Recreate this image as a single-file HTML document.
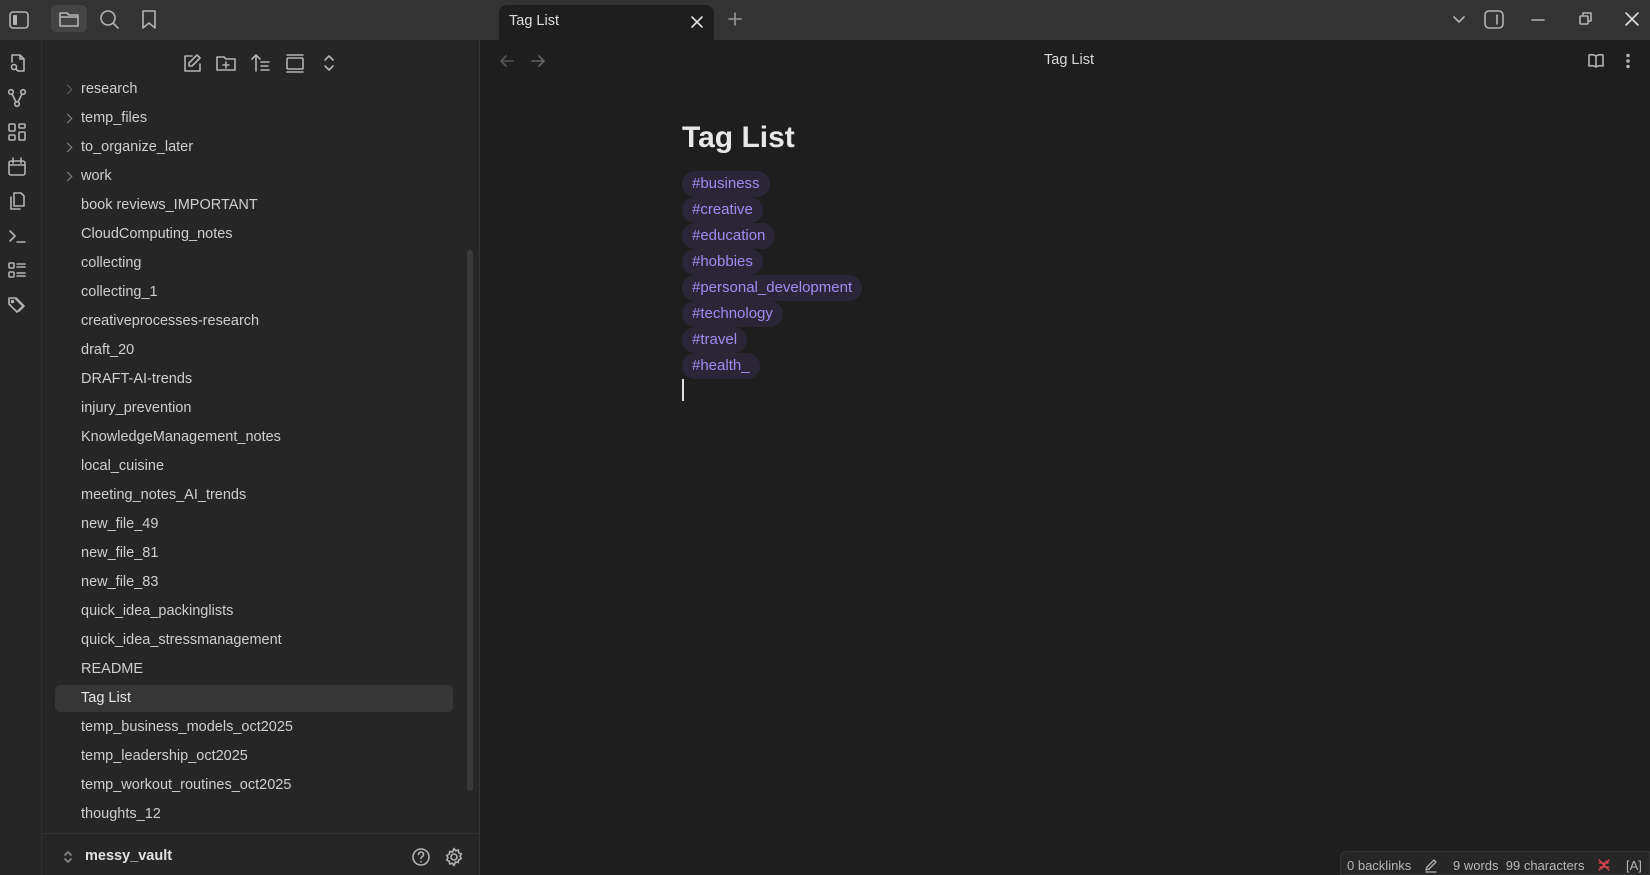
<!DOCTYPE html>
<html><head><meta charset="utf-8"><style>
*{margin:0;padding:0;box-sizing:border-box}
body{width:1650px;height:875px;overflow:hidden;background:#1e1e1e;font-family:"Liberation Sans","DejaVu Sans",sans-serif;color:#dadada;position:relative}
.abs{position:absolute}
svg{position:absolute;fill:none;stroke:#b3b3b3;stroke-width:1.6;stroke-linecap:round;stroke-linejoin:round}
.top{left:0;top:0;width:1650px;height:40px;background:#333333}
.rib{left:0;top:40px;width:42px;height:835px;background:#262626;border-right:1px solid #303030}
.side{left:42px;top:40px;width:438px;height:835px;background:#262626;border-right:1px solid #363636}
.f{position:absolute;left:81px;font-size:14.5px;color:#cfcfcf;line-height:20px;white-space:nowrap}
.chev{position:absolute;left:64px;width:7px;height:7px;border-right:1.5px solid #888;border-top:1.5px solid #888;transform:rotate(45deg)}
.tag{position:absolute;left:682px;height:26px;padding:0 10px;border-radius:13px;background:#2a2638;color:#a08cf0;font-size:15px;line-height:26px;white-space:nowrap}
</style></head><body>
<div class="abs top"></div>
<svg style="left:8px;top:9px" width="22" height="22" viewBox="0 0 22 22"><rect x="2" y="3" width="18" height="16" rx="3"/><rect x="5" y="6" width="4" height="10" rx="1" fill="#b3b3b3" stroke="none"/></svg>
<div class="abs" style="left:51px;top:5px;width:36px;height:27px;background:#444;border-radius:5px"></div>
<svg style="left:58px;top:8px" width="22" height="22" viewBox="0 0 22 22"><path d="M2 5h7l2 2h9v11H2z M2 9h18"/></svg>
<svg style="left:98px;top:8px" width="22" height="22" viewBox="0 0 22 22"><circle cx="10" cy="10" r="7"/><path d="M15 15l5 5"/></svg>
<svg style="left:138px;top:8px" width="22" height="22" viewBox="0 0 22 22"><path d="M5 3h12v17l-6-5-6 5z"/></svg>
<div class="abs" style="left:499px;top:5px;width:215px;height:35px;background:#1e1e1e;border-radius:8px 8px 0 0"></div>
<div class="abs" style="left:509px;top:13px;font-size:14.5px;color:#dedede">Tag List</div>
<svg style="left:689px;top:14px" width="16" height="16" viewBox="0 0 16 16"><path d="M3 3l10 10M13 3L3 13" stroke="#ddd"/></svg>
<svg style="left:727px;top:11px" width="16" height="16" viewBox="0 0 16 16"><path d="M8 2v12M2 8h12" stroke="#999"/></svg>
<svg style="left:1451px;top:13px" width="16" height="14" viewBox="0 0 16 14"><path d="M3 4l5 5 5-5"/></svg>
<svg style="left:1483px;top:9px" width="22" height="22" viewBox="0 0 22 22"><rect x="2" y="2" width="18" height="17" rx="4"/><path d="M14 6v9"/></svg>
<svg style="left:1528px;top:10px" width="20" height="20" viewBox="0 0 20 20"><path d="M4 10h12"/></svg>
<svg style="left:1576px;top:9px" width="20" height="20" viewBox="0 0 20 20"><rect x="4" y="7" width="8" height="8" rx="1"/><path d="M7 7V4h8v8h-3"/></svg>
<svg style="left:1622px;top:9px" width="20" height="20" viewBox="0 0 20 20"><path d="M4 4l12 12M16 4L4 16" stroke="#ddd"/></svg>
<div class="abs rib"></div>
<svg style="left:6px;top:52px" width="22" height="22" viewBox="0 0 22 22"><path d="M6 10V3h8l4 4v12h-6 M14 3v4h4"/><circle cx="8" cy="15" r="2.5"/><path d="M10 17l2 2"/></svg>
<svg style="left:6px;top:87px" width="22" height="22" viewBox="0 0 22 22"><circle cx="5" cy="5" r="2.3"/><circle cx="17" cy="5" r="2.3"/><circle cx="11" cy="17" r="2.3"/><path d="M6 7l4 8M16 7l-4 8"/></svg>
<svg style="left:6px;top:121px" width="22" height="22" viewBox="0 0 22 22"><rect x="3" y="3" width="6" height="7" rx="1"/><rect x="13" y="3" width="6" height="4" rx="1"/><rect x="3" y="14" width="6" height="5" rx="1"/><rect x="13" y="11" width="6" height="8" rx="1"/></svg>
<svg style="left:6px;top:156px" width="22" height="22" viewBox="0 0 22 22"><rect x="3" y="5" width="16" height="14" rx="2"/><path d="M3 9h16M7 2v5M15 2v5"/></svg>
<svg style="left:6px;top:190px" width="22" height="22" viewBox="0 0 22 22"><path d="M8 3h7l3 3v10H8z M5 7v12h9"/></svg>
<svg style="left:6px;top:225px" width="22" height="22" viewBox="0 0 22 22"><path d="M4 6l5 5-5 5M11 17h8"/></svg>
<svg style="left:6px;top:259px" width="22" height="22" viewBox="0 0 22 22"><rect x="3" y="4" width="5" height="5" rx="1"/><rect x="3" y="13" width="5" height="5" rx="1"/><path d="M11 5h8M11 8h8M11 14h8M11 17h8"/></svg>
<svg style="left:6px;top:294px" width="22" height="22" viewBox="0 0 22 22"><path d="M3 4v6l8 8 6-6-8-8z M10 4l8 8-5 5"/><circle cx="6.5" cy="7.5" r="1"/></svg>
<div class="abs side"></div>
<svg style="left:181px;top:52px" width="22" height="22" viewBox="0 0 22 22"><path d="M11 4H4v15h15v-7 M16 3l3 3-8 8H8v-3z"/></svg>
<svg style="left:215px;top:52px" width="22" height="22" viewBox="0 0 22 22"><path d="M2 5h7l2 2h9v11H2z M11 10v6M8 13h6"/></svg>
<svg style="left:250px;top:52px" width="22" height="22" viewBox="0 0 22 22"><path d="M6 19V3M2 7l4-4 4 4M11 10h8M11 14h7M11 18h8"/></svg>
<svg style="left:284px;top:52px" width="22" height="22" viewBox="0 0 22 22"><path d="M3 3h16"/><rect x="3" y="6" width="16" height="11" rx="1"/><path d="M3 20h16"/></svg>
<svg style="left:318px;top:52px" width="22" height="22" viewBox="0 0 22 22"><path d="M7 8l4-4 4 4M7 14l4 4 4-4"/></svg>
<div class="chev" style="top:86px;opacity:.6"></div>
<div class="f" style="top:79px">research</div>
<div class="chev" style="top:115px"></div><div class="f" style="top:108px">temp_files</div>
<div class="chev" style="top:144px"></div><div class="f" style="top:137px">to_organize_later</div>
<div class="chev" style="top:173px"></div><div class="f" style="top:166px">work</div>
<div class="f" style="top:195px">book reviews_IMPORTANT</div>
<div class="f" style="top:224px">CloudComputing_notes</div>
<div class="f" style="top:253px">collecting</div>
<div class="f" style="top:282px">collecting_1</div>
<div class="f" style="top:311px">creativeprocesses-research</div>
<div class="f" style="top:340px">draft_20</div>
<div class="f" style="top:369px">DRAFT-AI-trends</div>
<div class="f" style="top:398px">injury_prevention</div>
<div class="f" style="top:427px">KnowledgeManagement_notes</div>
<div class="f" style="top:456px">local_cuisine</div>
<div class="f" style="top:485px">meeting_notes_AI_trends</div>
<div class="f" style="top:514px">new_file_49</div>
<div class="f" style="top:543px">new_file_81</div>
<div class="f" style="top:572px">new_file_83</div>
<div class="f" style="top:601px">quick_idea_packinglists</div>
<div class="f" style="top:630px">quick_idea_stressmanagement</div>
<div class="f" style="top:659px">README</div>
<div class="abs" style="left:55px;top:685px;width:398px;height:27px;background:#363636;border-radius:5px"></div>
<div class="f" style="top:688px;color:#e6e6e6">Tag List</div>
<div class="f" style="top:717px">temp_business_models_oct2025</div>
<div class="f" style="top:746px">temp_leadership_oct2025</div>
<div class="f" style="top:775px">temp_workout_routines_oct2025</div>
<div class="f" style="top:804px">thoughts_12</div>
<div class="abs" style="left:467px;top:250px;width:6px;height:541px;background:#3a3a3a;border-radius:3px"></div>
<div class="abs" style="left:42px;top:833px;width:437px;height:1px;background:#333"></div>
<svg style="left:60px;top:849px" width="16" height="16" viewBox="0 0 16 16"><path d="M5 6l3-3 3 3M5 10l3 3 3-3" stroke="#888"/></svg>
<div class="abs" style="left:85px;top:848px;font-size:14.5px;font-weight:bold;color:#e0e0e0">messy_vault</div>
<svg style="left:410px;top:846px" width="22" height="22" viewBox="0 0 22 22"><circle cx="11" cy="11" r="8"/><path d="M8.5 8.5a2.5 2.5 0 1 1 3.5 2.3c-.7.4-1 .9-1 1.7M11 15.5v.2"/></svg>
<svg style="left:443px;top:846px" width="22" height="22" viewBox="0 0 22 22"><circle cx="11" cy="11" r="3"/><path d="M11 2.5l1.6 2.3 2.7-.8.4 2.8 2.6 1.1-1.3 2.4 1.3 2.4-2.6 1.1-.4 2.8-2.7-.8L11 19.5l-1.6-2.3-2.7.8-.4-2.8-2.6-1.1 1.3-2.4-1.3-2.4 2.6-1.1.4-2.8 2.7.8z"/></svg>
<svg style="left:498px;top:52px" width="18" height="18" viewBox="0 0 18 18"><path d="M15 9H3M8 4L3 9l5 5" stroke="#555"/></svg>
<svg style="left:529px;top:52px" width="18" height="18" viewBox="0 0 18 18"><path d="M3 9h12M10 4l5 5-5 5" stroke="#666"/></svg>
<div class="abs" style="left:1044px;top:52px;font-size:14.5px;color:#dadada">Tag List</div>
<svg style="left:1586px;top:51px" width="20" height="20" viewBox="0 0 20 20"><path d="M10 5v11M10 5c-2-1.5-5-1.5-7-1v11c2-.5 5-.5 7 1 2-1.5 5-1.5 7-1V4c-2-.5-5-.5-7 1"/></svg>
<svg style="left:1618px;top:51px" width="20" height="20" viewBox="0 0 20 20"><circle cx="10" cy="4.5" r="1" fill="#b3b3b3"/><circle cx="10" cy="10" r="1" fill="#b3b3b3"/><circle cx="10" cy="15.5" r="1" fill="#b3b3b3"/></svg>
<div class="abs" style="left:682px;top:121px;font-size:30px;font-weight:bold;color:#e8e8e8">Tag List</div>
<div class="tag" style="top:171px">#business</div>
<div class="tag" style="top:197px">#creative</div>
<div class="tag" style="top:223px">#education</div>
<div class="tag" style="top:249px">#hobbies</div>
<div class="tag" style="top:275px">#personal_development</div>
<div class="tag" style="top:301px">#technology</div>
<div class="tag" style="top:327px">#travel</div>
<div class="tag" style="top:353px">#health_</div>
<div class="abs" style="left:682px;top:379px;width:1.5px;height:22px;background:#ddd"></div>
<div class="abs" style="left:1340px;top:851px;width:310px;height:24px;background:#262626;border:1px solid #333;border-radius:6px 0 0 0"></div>
<div class="abs" style="left:1347px;top:858px;font-size:13px;color:#b8b8b8;white-space:nowrap">0 backlinks</div>
<svg style="left:1423px;top:857px" width="16" height="16" viewBox="0 0 16 16"><path d="M3 13l1-3 7-7 2 2-7 7z M3 15h10" stroke-width="1.3"/></svg>
<div class="abs" style="left:1453px;top:858px;font-size:13px;color:#b8b8b8;white-space:nowrap">9 words&nbsp; 99 characters</div>
<svg style="left:1596px;top:857px" width="16" height="16" viewBox="0 0 16 16"><path d="M3 3l10 10M13 3L3 13M3 6h9l-2-2M13 10H4l2 2" stroke="#e0444e" stroke-width="1.3"/></svg>
<div class="abs" style="left:1626px;top:858px;font-size:13px;color:#b8b8b8">[A]</div>
</body></html>
